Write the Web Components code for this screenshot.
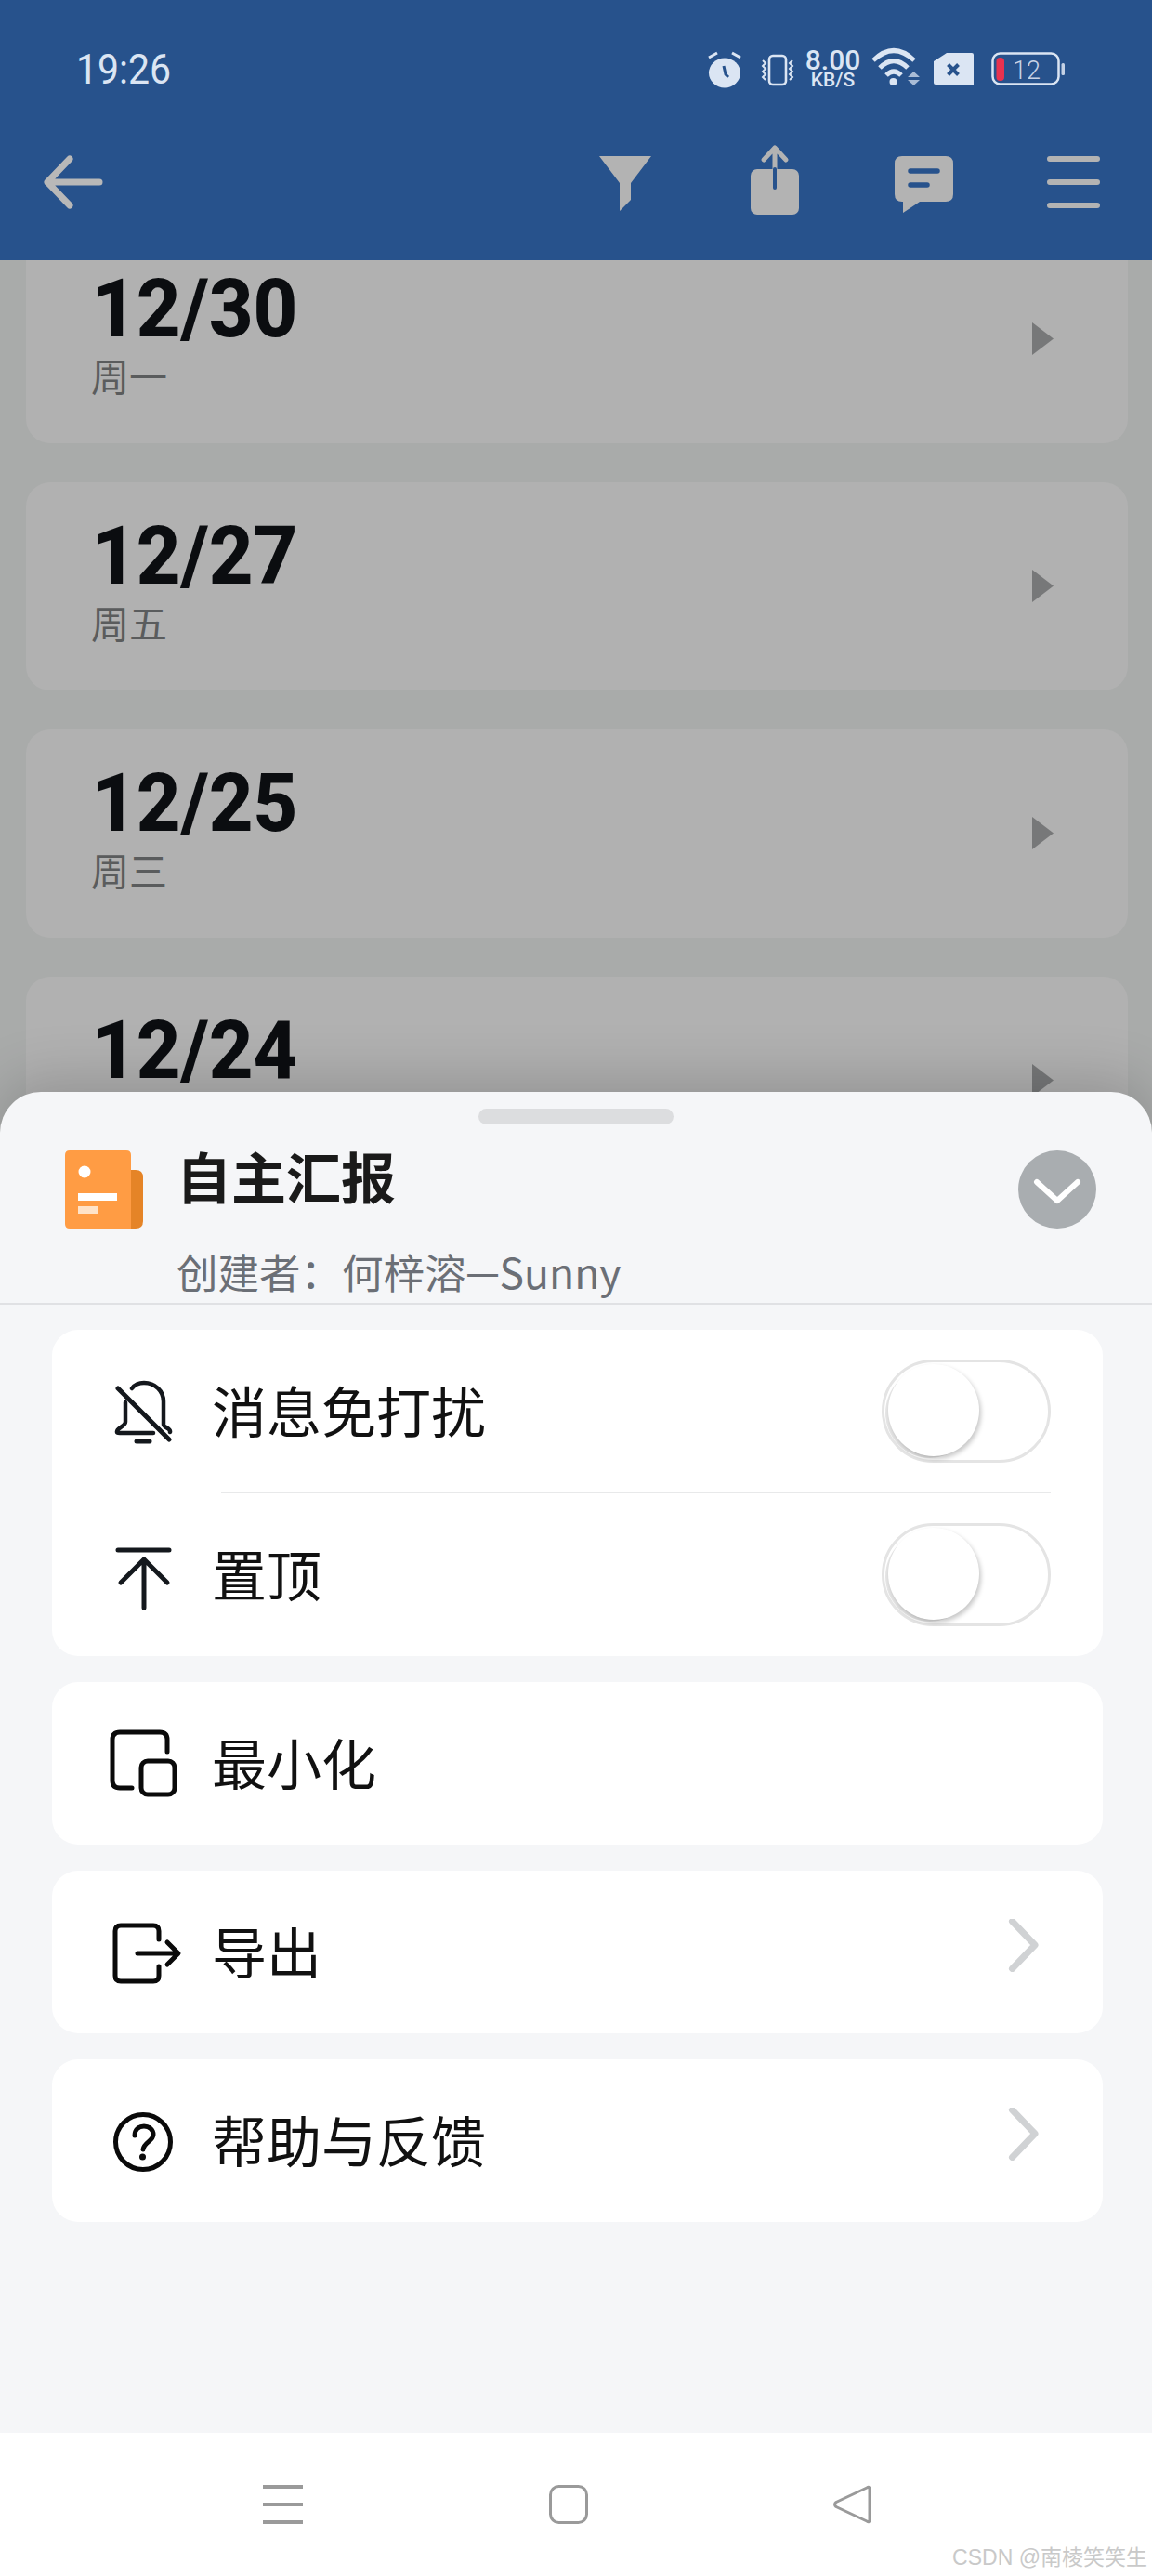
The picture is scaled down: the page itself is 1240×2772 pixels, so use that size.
<!DOCTYPE html>
<html lang="zh">
<head>
<meta charset="utf-8">
<title>自主汇报</title>
<style>
  html, body { margin: 0; padding: 0; background: #a9abaa; }
</style>
</head>
<body>
<app-shell>
  <status-bar slot="top"></status-bar>
  <app-bar slot="top"></app-bar>
  <day-card date="12/30" week="周一"></day-card>
  <day-card date="12/27" week="周五"></day-card>
  <day-card date="12/25" week="周三"></day-card>
  <day-card date="12/24" week=""></day-card>
  <bottom-sheet slot="sheet">
    <menu-group>
      <sheet-row icon="bell" label="消息免打扰" toggle></sheet-row>
      <sheet-row icon="pin" label="置顶" toggle divider></sheet-row>
    </menu-group>
    <menu-group>
      <sheet-row icon="min" label="最小化"></sheet-row>
    </menu-group>
    <menu-group>
      <sheet-row icon="export" label="导出" arrow></sheet-row>
    </menu-group>
    <menu-group>
      <sheet-row icon="help" label="帮助与反馈" arrow></sheet-row>
    </menu-group>
  </bottom-sheet>
</app-shell>

<script>
const CJK = '"Noto Sans CJK SC", "Noto Sans", sans-serif';

class AppShell extends HTMLElement {
  constructor() {
    super();
    this.attachShadow({ mode: "open" });
  }
  connectedCallback() {
    this.shadowRoot.innerHTML = `
      <style>
        :host {
          display: flex;
          flex-direction: column;
          position: relative;
          width: 1240px;
          height: 2772px;
          overflow: hidden;
          background: #a9abaa;
        }
        .list {
          flex: 1;
          overflow: hidden;
          display: flex;
          flex-direction: column;
          gap: 42px;
          padding: 0 26px 0 28px;
        }
        .scrolled { margin-top: -27px; display: flex; flex-direction: column; gap: 42px; }
      </style>
      <slot name="top"></slot>
      <div class="list"><div class="scrolled"><slot></slot></div></div>
      <slot name="sheet"></slot>
    `;
  }
}

class StatusBar extends HTMLElement {
  constructor() {
    super();
    this.attachShadow({ mode: "open" });
  }
  connectedCallback() {
    this.shadowRoot.innerHTML = `
      <style>
        :host {
          display: flex;
          height: 148px;
          box-sizing: border-box;
          padding: 53px 94px 0 82px;
          background: #27528c;
          color: #dbe5f3;
          font-family: Roboto, sans-serif;
        }
        .time {
          font-size: 41px;
          line-height: 42px;
          transform: scaleY(1.08);
          transform-origin: 0 50%;
          margin-top: 3px;
        }
        .icons { margin-left: auto; display: flex; align-items: flex-start; }
        svg { display: block; height: 42px; overflow: visible; }
        .speed { width: 59px; margin: 0 11px 0 12px; text-align: center; font-weight: 500; }
        .speed b { display: block; margin: 0 -4px; font-weight: 500; font-size: 30px; line-height: 24px; white-space: nowrap; }
        .speed i { display: block; margin: 0 -4px; font-style: normal; font-size: 21px; line-height: 19px; white-space: nowrap; }
      </style>
      <div class="time">19:26</div>
      <div class="icons">
        <svg width="38" viewBox="0 0 38 42">
          <ellipse cx="19" cy="25.500" rx="17" ry="16" fill="#dbe5f3"/>
          <path d="M2 9l9-5M36 9l-9-5" stroke="#dbe5f3" stroke-width="3" fill="none"/>
          <path d="M18 18l2 9 3 3" stroke="#27528c" stroke-width="3" fill="none"/>
        </svg>
        <svg width="37" viewBox="0 0 37 42" style="margin-left:19px">
          <rect x="10" y="7" width="18" height="31" rx="4" fill="none" stroke="#dbe5f3" stroke-width="2.600"/>
          <path d="M3 12l3 3-3 3 3 3-3 3 3 3-3 3 3 3M35 12l-3 3 3 3-3 3 3 3-3 3 3 3-3 3" fill="none" stroke="#dbe5f3" stroke-width="2"/>
        </svg>
        <div class="speed"><b>8.00</b><i>KB/S</i></div>
        <svg width="53" viewBox="0 0 53 42">
          <path d="M3 12Q25-9 47 12M10 20Q25 5 40 20M17 28Q25 20 33 28" fill="none" stroke="#dbe5f3" stroke-width="5"/>
          <circle cx="24.500" cy="35" r="4" fill="#dbe5f3"/>
          <path d="M40 30l6.500-6 6.500 6zM40 33l6.500 6 6.500-6z" fill="#a9bcd6"/>
        </svg>
        <svg width="43" viewBox="0 0 43 42" style="margin-left:15px">
          <path d="M14 4H41q2 0 2 2V38H2q-2 0-2-2V13z" fill="#dbe5f3"/>
          <path d="M15.500 16.500l11 11M26.500 16.500l-11 11" stroke="#27528c" stroke-width="4"/>
        </svg>
        <svg width="79" viewBox="0 0 79 42" style="margin-left:19px">
          <rect x="1.500" y="4.500" width="71" height="33" rx="8" fill="none" stroke="#dbe5f3" stroke-width="2.500"/>
          <rect x="5.500" y="9" width="8.500" height="25" rx="4" fill="#e8324f"/>
          <rect x="75.500" y="15" width="3.500" height="13" rx="1.500" fill="#c4d1e5"/>
          <text x="23" y="32" font-family="Roboto, sans-serif" font-weight="300" font-size="27" fill="#c8d3e6">12</text>
        </svg>
      </div>
    `;
  }
}

class AppBar extends HTMLElement {
  constructor() {
    super();
    this.attachShadow({ mode: "open" });
  }
  connectedCallback() {
    this.shadowRoot.innerHTML = `
      <style>
        :host {
          display: flex;
          align-items: flex-start;
          height: 132px;
          box-sizing: border-box;
          padding: 5px 56px 0 47px;
          background: #27528c;
        }
        svg { display: block; height: 80px; overflow: visible; }
      </style>
      <svg width="64" viewBox="0 0 64 80">
        <path d="M28 18L4 43l24 25M4 43h56" fill="none" stroke="#b8b8b8" stroke-width="7" stroke-linecap="round" stroke-linejoin="round"/>
      </svg>
      <svg width="56" viewBox="0 0 56 80" style="margin-left:534px">
        <path d="M0 15H56L34 44V62L22 74V44z" fill="#b3b3b3"/>
      </svg>
      <svg width="52" viewBox="0 0 52 80" style="margin-left:107px">
        <path d="M26 30V6M14 19L26 6l12 13" fill="none" stroke="#b3b3b3" stroke-width="5" stroke-linecap="round" stroke-linejoin="round"/>
        <rect y="29" width="52" height="49" rx="7" fill="#b3b3b3"/>
        <path d="M26 29V49" stroke="#27528c" stroke-width="4" stroke-linecap="round"/>
      </svg>
      <svg width="63" viewBox="0 0 63 80" style="margin-left:103px">
        <path d="M8 15H55q8 0 8 8V56q0 8-8 8H27L9 76V64H8q-8 0-8-8V23q0-8 8-8z" fill="#b3b3b3"/>
        <path d="M17 31H46M17 46H35" stroke="#27528c" stroke-width="5.500" stroke-linecap="round"/>
      </svg>
      <svg width="57" viewBox="0 0 57 80" style="margin-left:101px">
        <path d="M3 18H54M3 43H54M3 68H54" stroke="#b3b3b3" stroke-width="6" stroke-linecap="round"/>
      </svg>
    `;
  }
}

class DayCard extends HTMLElement {
  constructor() {
    super();
    this.attachShadow({ mode: "open" });
  }
  connectedCallback() {
    this.shadowRoot.innerHTML = `
      <style>
        :host {
          display: flex;
          align-items: flex-start;
          height: 224px;
          flex: none;
          box-sizing: border-box;
          padding: 40px 80px 0 72px;
          border-radius: 26px;
          background: #b1b1b1;
        }
        .text { flex: 1; }
        .date {
          margin-left: -1px;
          font: 800 83px/80px Roboto, sans-serif;
          color: #0b0d10;
          transform: scaleY(1.04);
        }
        .week {
          margin: 10px 0 0 -2px;
          font: 400 41px/40px ${CJK};
          color: #5a5c5d;
        }
        svg { display: block; width: 23px; height: 35px; margin-top: 54px; }
      </style>
      <div class="text">
        <div class="date">${this.getAttribute("date")}</div>
        <div class="week">${this.getAttribute("week")}</div>
      </div>
      <svg viewBox="0 0 23 35"><path d="M0 0L23 17.500L0 35z" fill="#777879"/></svg>
    `;
  }
}

class BottomSheet extends HTMLElement {
  constructor() {
    super();
    this.attachShadow({ mode: "open" });
  }
  connectedCallback() {
    this.shadowRoot.innerHTML = `
      <style>
        :host {
          display: flex;
          flex-direction: column;
          position: absolute;
          left: 0;
          right: 0;
          top: 1175px;
          bottom: 0;
          background: #f5f6f8;
          border-radius: 44px 44px 0 0;
          box-shadow: 0 -14px 60px rgba(0, 0, 0, 0.17);
        }
        .handle {
          width: 210px;
          height: 17px;
          margin: 18px auto 0;
          border-radius: 9px;
          background: #dcdddf;
        }
        .head {
          display: grid;
          grid-template-columns: 84px 1fr 84px;
          grid-template-rows: 84px auto;
          column-gap: 40px;
          height: 194px;
          box-sizing: border-box;
          padding: 28px 60px 0 70px;
          border-bottom: 2px solid #e0e1e4;
        }
        .title {
          margin: -3px 0 0 -4px;
          font: 700 59px/60px ${CJK};
          color: #1a1a1a;
        }
        .creator {
          grid-column: 2 / 4;
          margin: 21px 0 0 -4px;
          font: 400 44.500px/50px ${CJK};
          color: #6b6f76;
          white-space: nowrap;
        }
        .creator span { font-size: 36px; }
        .logo, .close { display: block; width: 84px; height: 84px; }
        .groups {
          display: flex;
          flex-direction: column;
          gap: 28px;
          padding: 27px 53px 0 56px;
        }
        .nav {
          position: relative;
          display: flex;
          margin-top: auto;
          height: 154px;
          box-sizing: border-box;
          padding: 56px 0 0 283px;
          background: #fff;
        }
        .nav svg { display: block; height: 42px; overflow: visible; }
        .mark {
          position: absolute;
          right: 5px;
          bottom: 7px;
          font: 400 23px/26px "Liberation Sans", ${CJK};
          color: #c9c9c9;
          white-space: nowrap;
        }
      </style>
      <div class="handle"></div>
      <div class="head">
        <svg class="logo" viewBox="0 0 84 84">
          <path d="M60 21H76q8 0 8 8V76q0 8-8 8H60z" fill="#e58427"/>
          <path d="M5 0H66q5 0 5 5V84H5q-5 0-5-5V5q0-5 5-5z" fill="#ff9c44"/>
          <ellipse cx="21" cy="23" rx="6.500" ry="6.500" fill="#fff"/>
          <rect x="14" y="46" width="42" height="8" fill="#fff"/>
          <rect x="14" y="60" width="21" height="8" fill="#ffe3c8"/>
        </svg>
        <div class="title">自主汇报</div>
        <svg class="close" viewBox="0 0 84 84">
          <circle cx="42" cy="42" r="42" fill="#a9adb0"/>
          <path d="M20 34L42 54L64 34" fill="none" stroke="#fff" stroke-width="6" stroke-linecap="round" stroke-linejoin="round"/>
        </svg>
        <div class="creator">创建者：何梓溶<span>一</span>Sunny</div>
      </div>
      <div class="groups"><slot></slot></div>
      <div class="nav">
        <svg width="43" viewBox="0 0 43 42">
          <path d="M0 2H43M0 21H43M0 40H43" stroke="#9a9a9a" stroke-width="4"/>
        </svg>
        <svg width="42" viewBox="0 0 42 42" style="margin-left:265px">
          <rect x="1.500" y="1.500" width="39" height="39" rx="9" fill="none" stroke="#9a9a9a" stroke-width="3"/>
        </svg>
        <svg width="41" viewBox="0 0 41 42" style="margin-left:264px">
          <path d="M39 4.500Q39 1 36 3L3 18.500Q0 21 3 23.500L36 39Q39 41 39 37.500z" fill="none" stroke="#9a9a9a" stroke-width="3" stroke-linejoin="round"/>
        </svg>
        <div class="mark">CSDN @南棱笑笑生</div>
      </div>
    `;
  }
}

class MenuGroup extends HTMLElement {
  constructor() {
    super();
    this.attachShadow({ mode: "open" });
  }
  connectedCallback() {
    this.shadowRoot.innerHTML = `
      <style>
        :host {
          display: block;
          border-radius: 28px;
          background: #fff;
          overflow: hidden;
        }
      </style>
      <slot></slot>
    `;
  }
}

class ToggleSwitch extends HTMLElement {
  constructor() {
    super();
    this.attachShadow({ mode: "open" });
  }
  connectedCallback() {
    this.shadowRoot.innerHTML = `
      <style>
        :host {
          display: block;
          position: relative;
          width: 182px;
          height: 111px;
          box-sizing: border-box;
          border: 3px solid #e4e4e4;
          border-radius: 56px;
          background: #fff;
        }
        .knob {
          position: absolute;
          left: 4px;
          top: 2px;
          width: 98px;
          height: 99px;
          border-radius: 50%;
          background: #fff;
          box-shadow: 2px 3px 5px rgba(0, 0, 0, 0.22), -4px 3px 0 -1px #e6e6e6;
        }
      </style>
      <div class="knob"></div>
    `;
  }
}

const ROW_ICONS = {
  bell: `<path d="M24 11C27 7 32 5 37 5C49 5 58 14 58 25V50C58 53 66 54 65 58M17 26V47C17 52 7 54 8 58C8 59 9 59 11 59H47" fill="none" stroke="#14181d" stroke-width="4.500" stroke-linecap="round" stroke-linejoin="round"/>
         <path d="M9 11L64 66" stroke="#14181d" stroke-width="5" stroke-linecap="round"/>
         <path d="M29 68H43" stroke="#14181d" stroke-width="5" stroke-linecap="round"/>`,
  pin: `<path d="M9 9H64M12 44L37 19L62 44M37 19V71" fill="none" stroke="#14181d" stroke-width="5" stroke-linecap="round" stroke-linejoin="round"/>`,
  min: `<path d="M24 62H11q-8 0-8-8V10q0-8 8-8H54q8 0 8 8V23" fill="none" stroke="#0a0a0a" stroke-width="5" stroke-linecap="round"/>
        <rect x="34" y="33" width="36" height="36" rx="7" fill="none" stroke="#0a0a0a" stroke-width="5"/>`,
  export: `<path d="M53 22V13q0-6-6-6H12q-6 0-6 6V61q0 6 6 6H47q6 0 6-6V51" fill="none" stroke="#0a0a0a" stroke-width="5" stroke-linecap="round"/>
           <path d="M30 37H73M62 25L74 37L62 49" fill="none" stroke="#0a0a0a" stroke-width="5" stroke-linecap="round" stroke-linejoin="round"/>`,
  help: `<circle cx="36" cy="37" r="29.500" fill="none" stroke="#0a0a0a" stroke-width="5"/>
         <path d="M27 30C27 24 31 20 37 20C43 20 47 24 47 29C47 36 37 37 36 45" fill="none" stroke="#0a0a0a" stroke-width="5" stroke-linecap="round"/>
         <circle cx="35.500" cy="53" r="3.500" fill="#0a0a0a"/>`,
};

class SheetRow extends HTMLElement {
  constructor() {
    super();
    this.attachShadow({ mode: "open" });
  }
  connectedCallback() {
    const toggle = this.hasAttribute("toggle") ? "<toggle-switch></toggle-switch>" : "";
    const arrow = this.hasAttribute("arrow")
      ? `<svg class="arrow" viewBox="0 0 34 57"><path d="M5.500 2.500L30 28L5.500 53.500" fill="none" stroke="#d0d2d4" stroke-width="7" stroke-linecap="round" stroke-linejoin="round"/></svg>`
      : "";
    this.shadowRoot.innerHTML = `
      <style>
        :host { display: block; }
        .line {
          height: 1px;
          margin: 0 56px 0 182px;
          background: #e8e9ea;
        }
        .row {
          display: flex;
          align-items: center;
          height: 175px;
          box-sizing: border-box;
          padding-left: 62px;
          padding-right: 56px;
        }
        .ico { flex: none; width: 72px; height: 72px; overflow: visible; display: block; }
        .label {
          flex: 1;
          margin: 0 0 3px 38px;
          font: 400 59px/72px ${CJK};
          color: #111;
        }
        .arrow { display: block; flex: none; width: 34px; height: 57px; margin: 0 13px 14px 0; }
      </style>
      ${this.hasAttribute("divider") ? '<div class="line"></div>' : ""}
      <div class="row">
        <svg class="ico" viewBox="0 0 72 72">${ROW_ICONS[this.getAttribute("icon")]}</svg>
        <div class="label">${this.getAttribute("label")}</div>
        ${toggle}${arrow}
      </div>
    `;
  }
}

customElements.define("app-shell", AppShell);
customElements.define("status-bar", StatusBar);
customElements.define("app-bar", AppBar);
customElements.define("day-card", DayCard);
customElements.define("bottom-sheet", BottomSheet);
customElements.define("menu-group", MenuGroup);
customElements.define("toggle-switch", ToggleSwitch);
customElements.define("sheet-row", SheetRow);
</script>
</body>
</html>
